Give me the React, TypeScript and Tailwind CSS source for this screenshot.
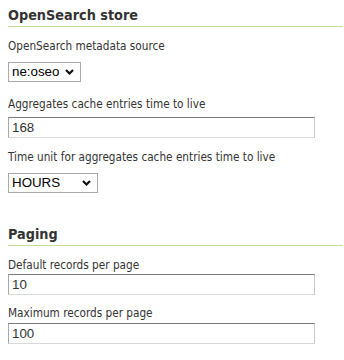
import React from "react";

const Chevron = () => (
  <svg width="9" height="6" viewBox="0 0 9 6" className="pointer-events-none absolute top-1/2 -translate-y-1/2 right-[7px]">
    <path d="M1 1 L4.5 4.5 L8 1" fill="none" stroke="#111" strokeWidth="2.2" />
  </svg>
);

function Select({ value, width }: { value: string; width: string }) {
  return (
    <div className={`relative ${width}`}>
      <select
        defaultValue={value}
        className="block appearance-none w-full h-[20px] border border-[#a9a9a9] bg-white pl-[3px] text-[13.33px] leading-[18px] text-black outline-none"
        style={{ fontFamily: "'Liberation Sans', Arial, sans-serif" }}
      >
        <option>{value}</option>
      </select>
      <Chevron />
    </div>
  );
}

function TextInput({ value }: { value: string }) {
  return (
    <input
      defaultValue={value}
      className="block w-[307px] h-[21px] border-t border-l border-r border-b border-t-[#7a7a7a] border-l-[#a8a8a8] border-r-[#c8c8c8] border-b-[#d8d8d8] bg-white pl-[3px] text-[13.33px] text-[#333] outline-none"
      style={{ fontFamily: "'Liberation Sans', Arial, sans-serif" }}
    />
  );
}

export default function App() {
  return (
    <div
      className="w-[344px] h-[360px] bg-white pl-[8px] pr-[1px] text-[#333] flex flex-col"
      style={{ fontFamily: "'DejaVu Sans Condensed', 'DejaVu Sans', Tahoma, sans-serif" }}
    >
      <h2 className="pt-[5px] pb-[1px] leading-[20px] text-[14.3px] font-bold text-[#333] border-b border-[#c5e09b]">
        OpenSearch store
      </h2>
      <label className="mt-[11px] text-[11.7px] leading-[16px]">OpenSearch metadata source</label>
      <div className="mt-[8px]">
        <Select value="ne:oseo" width="w-[73px]" />
      </div>
      <label className="mt-[14px] text-[11.7px] leading-[16px]">Aggregates cache entries time to live</label>
      <div className="mt-[5px]">
        <TextInput value="168" />
      </div>
      <label className="mt-[11px] text-[11.7px] leading-[16px]">Time unit for aggregates cache entries time to live</label>
      <div className="mt-[8px]">
        <Select value="HOURS" width="w-[90px]" />
      </div>
      <h2 className="mt-[26px] pt-[5px] pb-[1px] leading-[20px] text-[14.3px] font-bold text-[#333] border-b border-[#c5e09b]">
        Paging
      </h2>
      <label className="mt-[11px] text-[11.7px] leading-[16px]">Default records per page</label>
      <div className="mt-[1px]">
        <TextInput value="10" />
      </div>
      <label className="mt-[10px] text-[11.7px] leading-[16px]">Maximum records per page</label>
      <div className="mt-[2px]">
        <TextInput value="100" />
      </div>
    </div>
  );
}
